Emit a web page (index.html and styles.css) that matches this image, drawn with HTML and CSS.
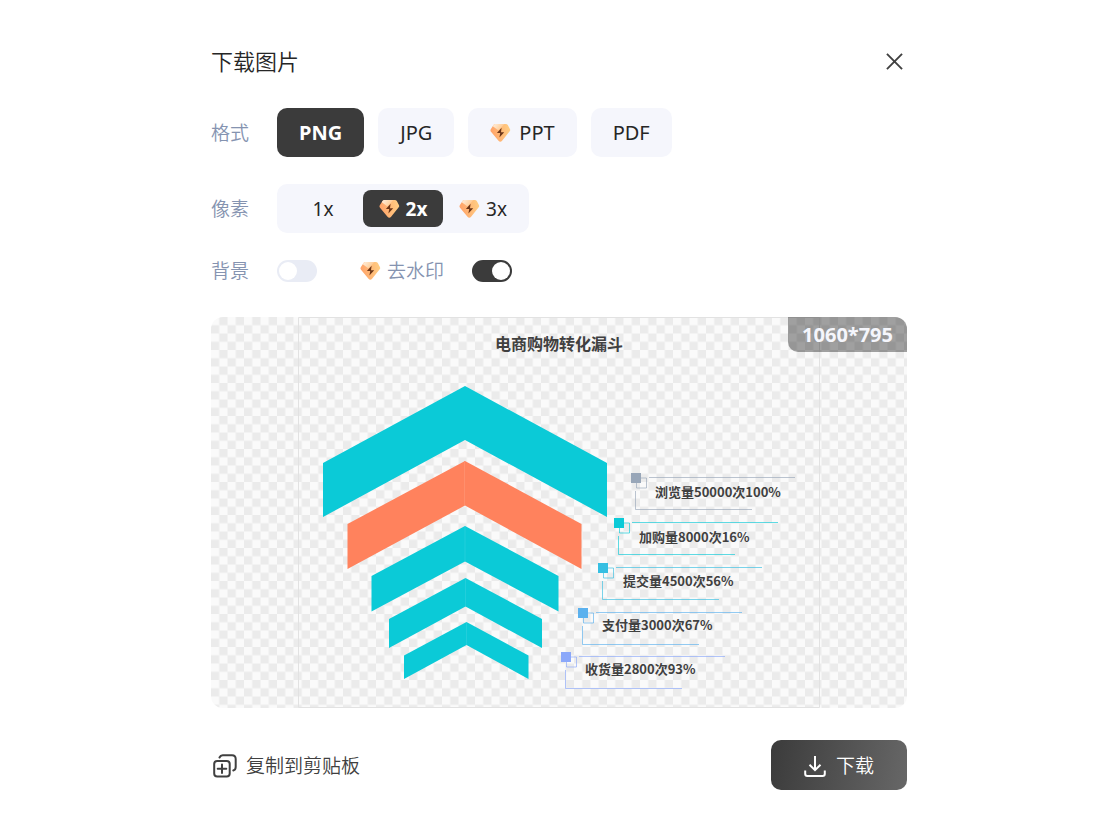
FILE: index.html
```html
<!DOCTYPE html>
<html lang="zh-CN">
<head>
<meta charset="utf-8">
<title>下载图片</title>
<link rel="stylesheet" href="styles.css">
</head>
<body>
<svg class="defs" width="0" height="0" aria-hidden="true">
  <defs>
    <linearGradient id="gem-fill" x1="0" y1="0.4" x2="1" y2="0.3">
      <stop offset="0" stop-color="#ffa268"/><stop offset="1" stop-color="#ffce84"/>
    </linearGradient>
    <linearGradient id="gem-shine" x1="0" y1="0" x2="1" y2="0.4">
      <stop offset="0" stop-color="#fff0e0"/><stop offset="1" stop-color="#ffc688"/>
    </linearGradient>
    <symbol id="gem" viewBox="0 0 21 20">
      <path d="M5.500 1h10.300c.9 0 1.500.3 2 1l2.100 3.900c.5.900.4 1.700-.2 2.400l-7.600 9.500c-1.100 1.300-2.500 1.300-3.600 0L1 8.700C.400 8 .3 7.200.8 6.300L3.500 2C4 1.300 4.600 1 5.500 1z" fill="url(#gem-fill)"/>
      <path d="M5.500 1h9L8.500 7.500 2.800 3.200 3.500 2C4 1.300 4.600 1 5.500 1z" fill="url(#gem-shine)"/>
      <path d="M11.600 4.800 6.900 10h3.300l-.8 4.600 4.800-5.300h-3.200z" fill="#6b3517"/>
    </symbol>
  </defs>
</svg>
<main class="dialog">
  <header class="header">
    <h1 class="title">下载图片</h1>
    <button class="close" type="button" aria-label="关闭">
      <svg width="17" height="17" viewBox="0 0 18 18"><path d="M1 1l16 16M17 1L1 17"/></svg>
    </button>
  </header>

  <section class="row formats" aria-labelledby="format-label">
    <span class="label" id="format-label">格式</span>
    <div class="choices">
      <button class="choice selected" type="button" aria-pressed="true">PNG</button>
      <button class="choice" type="button" aria-pressed="false">JPG</button>
      <button class="choice" type="button" aria-pressed="false"><svg class="gem"><use href="#gem"/></svg>PPT</button>
      <button class="choice" type="button" aria-pressed="false">PDF</button>
    </div>
  </section>

  <section class="row pixels" aria-labelledby="pixel-label">
    <span class="label" id="pixel-label">像素</span>
    <div class="segments">
      <button class="segment" type="button" aria-pressed="false">1x</button>
      <button class="segment selected" type="button" aria-pressed="true"><svg class="gem"><use href="#gem"/></svg>2x</button>
      <button class="segment" type="button" aria-pressed="false"><svg class="gem"><use href="#gem"/></svg>3x</button>
    </div>
  </section>

  <section class="row switches">
    <label class="label" for="background">背景</label>
    <div class="switch-group">
      <input class="switch" id="background" type="checkbox" role="switch">
      <label class="label watermark" for="watermark"><svg class="gem"><use href="#gem"/></svg>去水印</label>
      <input class="switch" id="watermark" type="checkbox" role="switch" checked>
    </div>
  </section>

  <figure class="preview">
    <svg class="chart" viewBox="0 0 696 391" role="img" aria-label="电商购物转化漏斗">
      <defs>
        <pattern id="checker" width="33" height="33" patternUnits="userSpaceOnUse" patternTransform="scale(.5)">
          <path d="M0 0h33v33H0z" fill="#fafafa"/>
          <path d="M16.500 0H33v16.500H16.500zM0 16.500h16.500V33H0z" fill="#ebebeb"/>
        </pattern>
      </defs>
      <rect width="696" height="391" fill="url(#checker)"/>
      <path d="M87.500 .5h521v390h-521z" fill="none" stroke="#e2e2e2"/>
      <text class="chart-title" x="348" y="33" text-anchor="middle">电商购物转化漏斗</text>

      <g fill="#0bcad7">
        <path d="M254 69 396 146V200L254 123 112 200V146z"/>
        <path d="M254 209 347.500 259V294.500L254 244.500 160.500 294.500V259z"/>
        <path d="M254.500 261 331 302V331L254.500 289.500 178 331V302z"/>
        <path d="M255.500 305 317.500 338.500V362L255.500 328 193 362V338.500z"/>
      </g>
      <path d="M254 144 370.500 207V252L254 188.500 136.500 252V207z" fill="#ff825d"/>
      <path d="M253.500 144v44" stroke="#ff8f6d"/>
      <path d="M254 209v35M254.500 261v28M255.500 305v23" stroke="#3bd3de" stroke-width=".5"/>

      <g class="mark" style="color:#98a6b8" transform="translate(420 156)">
        <path class="square" d="M0 0h10v10H0z"/><path class="lines" d="M5.500 10v5h10V5H10M18 4.500h146M4.500 18v18.500H121"/>
        <text x="24" y="24">浏览量50000次100%</text>
      </g>
      <g class="mark" style="color:#0bcad7" transform="translate(403 201)">
        <path class="square" d="M0 0h10v10H0z"/><path class="lines" d="M5.500 10v5h10V5H10M18 4.500h146M4.500 18v18.500H121"/>
        <text x="25" y="24">加购量8000次16%</text>
      </g>
      <g class="mark" style="color:#36bfe2" transform="translate(387 246)">
        <path class="square" d="M0 0h10v10H0z"/><path class="lines" d="M5.500 10v5h10V5H10M18 4.500h146M4.500 18v18.500H121"/>
        <text x="25" y="23">提交量4500次56%</text>
      </g>
      <g class="mark" style="color:#5bb1ee" transform="translate(367 291)">
        <path class="square" d="M0 0h10v10H0z"/><path class="lines" d="M5.500 10v5h10V5H10M18 4.500h146M4.500 18v18.500H121"/>
        <text x="24" y="22">支付量3000次67%</text>
      </g>
      <g class="mark" style="color:#8ba8fa" transform="translate(350 335)">
        <path class="square" d="M0 0h10v10H0z"/><path class="lines" d="M5.500 10v5h10V5H10M18 4.500h146M4.500 18v18.500H121"/>
        <text x="24" y="22">收货量2800次93%</text>
      </g>
    </svg>
    <figcaption class="size">1060*795</figcaption>
  </figure>

  <footer class="footer">
    <button class="copy" type="button">
      <svg width="24" height="24" viewBox="0 0 24 24"><rect x="1.200" y="7" width="15.500" height="15.500" rx="3"/><path d="M9 10.500v8.500M4.700 14.750h8.600M6.500 3.500c.6-1.400 1.600-2.200 3.200-2.200H19c2.400 0 3.700 1.400 3.700 3.700v8c0 1.800-.7 3-2.400 3.500"/></svg>
      复制到剪贴板
    </button>
    <button class="download" type="button">
      <svg width="22" height="22" viewBox="0 0 22 22"><path d="M11 1v14M5.500 9.700 11 15.200l5.500-5.500M1.200 15.500v3.300c0 1.400.6 2.200 2.200 2.200h15.200c1.600 0 2.200-.8 2.200-2.200v-3.300"/></svg>
      下载
    </button>
  </footer>
</main>
</body>
</html>
```
FILE: styles.css
```css
* {
  box-sizing: border-box;
}

body {
  margin: 0;
  padding: 44px 213px 50px 211px;
  background: #fff;
  color: #262626;
  font: 350 19px/28px "Noto Sans", "Noto Sans CJK SC", sans-serif;
}

button {
  display: flex;
  align-items: center;
  justify-content: center;
  padding: 0;
  border: 0;
  background: none;
  color: inherit;
  font: inherit;
  white-space: nowrap;
  cursor: pointer;
}

svg {
  flex: none;
}

.defs {
  position: absolute;
}

.gem {
  width: 21px;
  height: 20px;
}

.header {
  display: flex;
  align-items: center;
  justify-content: space-between;
  height: 34px;
  padding-right: 4px;
}

.title {
  margin: 0;
  font-size: 22px;
  font-weight: 350;
}

.close svg {
  fill: none;
  stroke: #404040;
  stroke-width: 2;
}

.row {
  display: grid;
  grid-template-columns: 66px 1fr;
  align-items: center;
}

.formats {
  margin-top: 30px;
}

.pixels {
  margin-top: 27px;
}

.switches {
  margin-top: 24px;
}

.label {
  color: #8593b0;
}

.choices {
  display: flex;
  gap: 14px;
}

.choice {
  gap: 8px;
  height: 49px;
  padding: 0 22px;
  border-radius: 10px;
  background: #f5f6fc;
  font-size: 20px;
  font-weight: 400;
}

.segments {
  display: flex;
  align-items: center;
  justify-self: start;
  height: 49px;
  padding: 6px;
  border-radius: 10px;
  background: #f5f6fc;
}

.segment {
  gap: 6px;
  min-width: 80px;
  height: 37px;
  border-radius: 8px;
  font-size: 19px;
  font-weight: 400;
}

.choice.selected,
.segment.selected {
  background: #3b3b3b;
  color: #fff;
  font-weight: 700;
}

.switch-group {
  display: flex;
  align-items: center;
}

.watermark {
  display: flex;
  align-items: center;
  gap: 6px;
  margin: 0 28px 0 43px;
}

.switch {
  display: flex;
  appearance: none;
  width: 40px;
  height: 22px;
  margin: 0;
  padding: 2px;
  border-radius: 11px;
  background: #e9ecf5;
}

.switch::before {
  width: 18px;
  height: 18px;
  border-radius: 50%;
  background: #fff;
  content: "";
}

.switch:checked {
  justify-content: flex-end;
  background: #3b3b3b;
}

.preview {
  position: relative;
  overflow: hidden;
  margin: 32px 0 0;
  border-radius: 12px;
}

.chart {
  display: block;
  width: 100%;
  font-family: "Noto Sans CJK SC", sans-serif;
  font-weight: 700;
  fill: #404040;
}

.chart-title {
  font-size: 16px;
}

.mark {
  font-size: 13px;
}

.square {
  fill: currentColor;
}

.lines {
  fill: none;
  stroke: currentColor;
  stroke-opacity: 0.65;
}

.size {
  position: absolute;
  top: 0;
  right: 0;
  padding: 0 14px;
  border-bottom-left-radius: 10px;
  background: rgb(0 0 0 / 36%);
  color: #f5f6fc;
  font-size: 20px;
  font-weight: 700;
  line-height: 35px;
}

.footer {
  display: flex;
  align-items: center;
  justify-content: space-between;
  margin-top: 32px;
}

.copy {
  gap: 9px;
  padding: 2px 0 0 2px;
  color: #404040;
}

.copy svg {
  fill: none;
  stroke: #404040;
  stroke-width: 2;
  stroke-linecap: round;
}

.download {
  gap: 10px;
  width: 136px;
  height: 50px;
  padding-top: 2px;
  border-radius: 10px;
  background: linear-gradient(100deg, #3b3b3b, #676767);
  color: #fff;
}

.download svg {
  fill: none;
  stroke: #fff;
  stroke-width: 2;
}
```
